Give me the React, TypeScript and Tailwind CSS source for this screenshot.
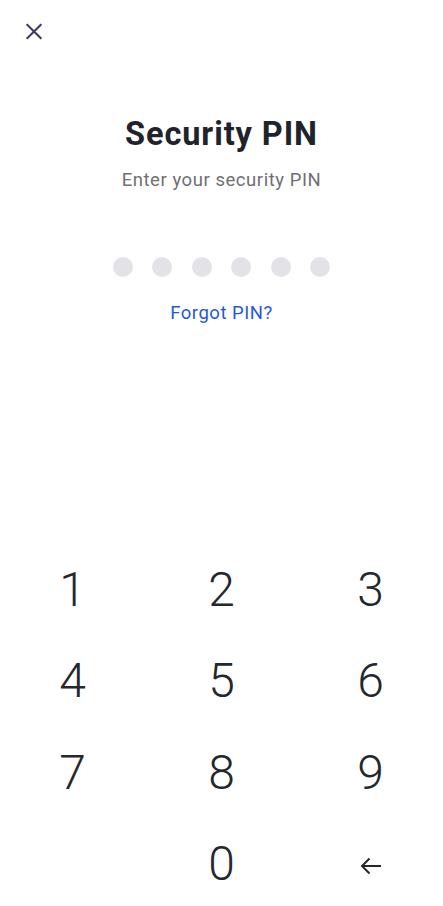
import { useState } from 'react';

const keys = ['1', '2', '3', '4', '5', '6', '7', '8', '9', '', '0', 'back'];

export default function App() {
  const [pin, setPin] = useState('');

  const press = (k: string) => {
    if (k === 'back') setPin((p) => p.slice(0, -1));
    else if (k && pin.length < 6) setPin((p) => p + k);
  };

  return (
    <div className="min-h-[906px] w-full overflow-hidden bg-white font-['Roboto','Liberation_Sans',sans-serif]">
      {/* top bar */}
      <div className="h-[62px] pl-[26px] pt-[23px]">
        <button className="flex h-4 w-4 items-center justify-center text-[#3d3866]">
          <svg width="17" height="17" viewBox="0 0 17 17" fill="none" stroke="currentColor" strokeWidth="2.2" strokeLinecap="square">
            <path d="M1.5 1.5 L15.5 15.5 M15.5 1.5 L1.5 15.5" />
          </svg>
        </button>
      </div>

      <div className="flex flex-col items-center">
        <h1 className="mt-[52px] text-[32.5px] leading-[40px] font-bold tracking-[0.9px] text-[#1f232c]">Security PIN</h1>
        <p className="mt-[14px] text-[18.5px] leading-[24px] tracking-[0.55px] text-[#6f6f73]">Enter your security PIN</p>

        <div className="mt-[65px] flex gap-[19.4px]">
          {[0, 1, 2, 3, 4, 5].map((i) => (
            <span
              key={i}
              className={i < pin.length ? 'h-5 w-5 rounded-full bg-[#1f232c]' : 'h-5 w-5 rounded-full bg-[#e3e3e7]'}
            />
          ))}
        </div>

        <button className="mt-[24px] text-[18.5px] leading-[24px] tracking-[0.5px] text-[#1f5ad6]">Forgot PIN?</button>
      </div>

      {/* keypad */}
      <div className="mt-[219px] grid grid-cols-[149px_149px_149px] justify-center">
        {keys.map((k, i) => (
          <button
            key={i}
            onClick={() => press(k)}
            className="flex h-[91.5px] items-center justify-center text-[48px] leading-none font-light text-[#24272d]"
          >
            {k === 'back' ? (
              <svg width="22" height="18" viewBox="0 0 22 18" fill="none" stroke="currentColor" strokeWidth="2" className="mt-[3px]">
                <path d="M21 9 H2 M9.5 1.5 L2 9 L9.5 16.5" />
              </svg>
            ) : (
              k
            )}
          </button>
        ))}
      </div>
    </div>
  );
}
